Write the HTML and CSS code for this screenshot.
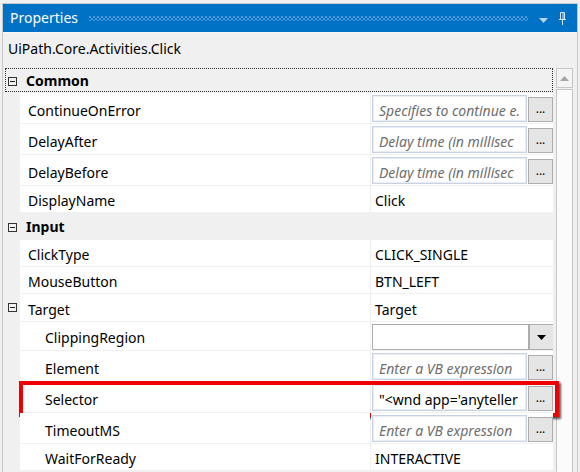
FILE: index.html
```html
<!DOCTYPE html>
<html>
<head>
<meta charset="utf-8">
<link rel="stylesheet" href="styles.css">
</head>
<body>
<div class="panel">
  <div class="titlebar">
    <span class="title">Properties</span>
    <span class="grip"></span>
    <svg class="menu-arrow" width="9" height="5" viewBox="0 0 9 5"><path d="M0 0h9L4.5 5z" fill="#b9d5f0"/></svg>
    <svg class="pin" width="9" height="13" viewBox="0 0 9 13"><path d="M2.5 0.5h4v7h-4z M1 7.5h7 M4.5 7.5v5.5" fill="none" stroke="#d6e7f7" stroke-width="1"/><path d="M5 1v6" stroke="#d6e7f7" stroke-width="1"/></svg>
  </div>
  <div class="typename">UiPath.Core.Activities.Click</div>
  <div class="body">
    <div class="grid">
      <div class="cat focused"><span class="exp"></span><span class="cat-name">Common</span></div>
      <div class="row ed"><div class="gutter"></div><div class="name">ContinueOnError</div><div class="val"><div class="tb ph">Specifies to continue e.</div><div class="btn">...</div></div></div>
      <div class="row ed"><div class="gutter"></div><div class="name">DelayAfter</div><div class="val"><div class="tb ph">Delay time (in millisec</div><div class="btn">...</div></div></div>
      <div class="row ed"><div class="gutter"></div><div class="name">DelayBefore</div><div class="val"><div class="tb ph">Delay time (in millisec</div><div class="btn">...</div></div></div>
      <div class="row tx"><div class="gutter"></div><div class="name">DisplayName</div><div class="val">Click</div></div>
      <div class="cat"><span class="exp"></span><span class="cat-name">Input</span></div>
      <div class="row tx"><div class="gutter"></div><div class="name">ClickType</div><div class="val">CLICK_SINGLE</div></div>
      <div class="row tx"><div class="gutter"></div><div class="name">MouseButton</div><div class="val">BTN_LEFT</div></div>
      <div class="row tx tall"><div class="gutter"><span class="exp"></span></div><div class="name">Target</div><div class="val">Target</div></div>
      <div class="row dd"><div class="gutter"></div><div class="name sub">ClippingRegion</div><div class="val"><div class="combo"></div><div class="btn arrow"><svg width="9" height="5" viewBox="0 0 9 5"><path d="M0 0h9L4.5 5z" fill="#000"/></svg></div></div></div>
      <div class="row ed"><div class="gutter"></div><div class="name sub">Element</div><div class="val"><div class="tb ph">Enter a VB expression</div><div class="btn">...</div></div></div>
      <div class="row ed"><div class="gutter"></div><div class="name sub">Selector</div><div class="val"><div class="tb">"&lt;wnd app='anyteller</div><div class="btn">...</div></div><div class="redbox"></div></div>
      <div class="row ed"><div class="gutter"></div><div class="name sub">TimeoutMS</div><div class="val"><div class="tb ph">Enter a VB expression</div><div class="btn">...</div></div></div>
      <div class="row tx"><div class="gutter"></div><div class="name sub">WaitForReady</div><div class="val">INTERACTIVE</div></div>
    </div>
    <div class="scrollbar">
      <div class="sb-up"><svg width="9" height="5" viewBox="0 0 9 5"><path d="M0 5h9L4.5 0z" fill="#a6a6a6"/></svg></div>
      <div class="sb-thumb"></div>
    </div>
  </div>
</div>
</body>
</html>
```

FILE: styles.css
```css
html, body {
  margin: 0;
  padding: 0;
}
body {
  width: 580px;
  height: 472px;
  overflow: hidden;
  background: #f0f0f0;
  font-family: "Noto Sans", "Open Sans", sans-serif;
  font-size: 14px;
  color: #000;
}
.panel {
  margin: 3px 0 0 2px;
  width: 576px;
  height: 469px;
  box-sizing: border-box;
  border: 1px solid #c8c8c8;
  border-bottom: none;
  display: flex;
  flex-direction: column;
  overflow: hidden;
}
.titlebar {
  height: 28px;
  flex: none;
  background: #0072c6;
  display: flex;
  align-items: center;
  padding: 0 10px 0 7px;
  color: #fff;
}
.title {
  font-size: 14px;
  line-height: 28px;
}
.grip {
  flex: 1;
  height: 5px;
  margin: 0 11px 0 11px;
  background-image:
    radial-gradient(circle at 1px 1px, #4a98d8 0.8px, transparent 1.1px),
    radial-gradient(circle at 3px 3px, #4a98d8 0.8px, transparent 1.1px);
  background-size: 4px 4px;
}
.menu-arrow {
  margin-top: 4px;
  margin-right: 10px;
}
.pin {
  display: block;
}
.typename {
  height: 36px;
  line-height: 32px;
  padding-left: 5px;
  flex: none;
  border-top: 1px solid #f7f7f7;
  box-sizing: border-box;
}
.body {
  flex: 1;
  display: flex;
}
.grid {
  width: 550px;
  flex: none;
}
.cat {
  height: 27px;
  display: flex;
  align-items: flex-start;
  margin-left: 2px;
  border: 1px dotted transparent;
  box-sizing: border-box;
  font-weight: bold;
  padding-top: 3px;
}
.cat.focused {
  height: 24px;
  margin-bottom: 1px;
  padding-top: 2px;
  border-color: #303030;
}
.exp {
  width: 9px;
  height: 9px;
  border: 1px solid #333;
  box-sizing: border-box;
  position: relative;
  margin: 6px 0 0 2px;
  flex: none;
}
.exp::after {
  content: "";
  position: absolute;
  left: 1px;
  right: 1px;
  top: 3px;
  height: 1px;
  background: #222;
}
.cat-name {
  margin-left: 9px;
  line-height: 19px;
}
.row {
  display: flex;
  gap: 1px;
  padding-bottom: 1px;
  position: relative;
}
.row.ed { height: 30px; }
.row.tx { height: 26px; }
.row.tx.tall { height: 27px; }
.row.dd { height: 28px; }
.gutter {
  width: 16px;
  flex: none;
  display: flex;
  align-items: center;
}
.gutter .exp {
  margin: 0 0 0 5px;
}
.name {
  width: 350px;
  flex: none;
  background: #fff;
  padding-left: 8px;
  box-sizing: border-box;
  white-space: nowrap;
  line-height: 19px;
}
.name.sub { padding-left: 25px; }
.row.tx .name, .row.tx .val { padding-top: 5px; line-height: 19px; }
.row.tx.tall .name, .row.tx.tall .val { padding-top: 6px; }
.row.ed .name { padding-top: 8px; }
.row.dd .name { padding-top: 6px; }
.val {
  flex: 1;
  background: #fff;
  display: flex;
  align-items: flex-start;
  padding-left: 4px;
  white-space: nowrap;
  overflow: hidden;
}
.row.ed .val, .row.dd .val { padding-left: 1px; }
.tb {
  width: 155px;
  height: 27px;
  margin-top: 2px;
  box-sizing: border-box;
  border: 1px solid #c9d2e3;
  box-shadow: inset 0 0 0 1px #e9edf4;
  padding: 5px 0 0 6px;
  line-height: 19px;
  overflow: hidden;
  white-space: nowrap;
  flex: none;
}
.tb.ph {
  font-style: italic;
  color: #6e6e6e;
}
.btn {
  width: 25px;
  height: 25px;
  margin: 4px 0 0 1px;
  box-sizing: border-box;
  border: 1px solid #adadad;
  background: #e5e5e5;
  font-size: 12px;
  line-height: 22px;
  text-align: center;
  flex: none;
}
.combo {
  width: 157px;
  height: 26px;
  margin-top: 2px;
  box-sizing: border-box;
  border: 1px solid #acacac;
  flex: none;
}
.btn.arrow {
  margin: 2px 0 0 0;
  height: 26px;
  display: flex;
  align-items: center;
  justify-content: center;
}
.redbox {
  position: absolute;
  left: 16px;
  top: -1px;
  width: 540px;
  height: 36px;
  box-sizing: border-box;
  border: 4px solid #ee0000;
  box-shadow: 2px 2px 2px rgba(0, 0, 0, 0.65);
}
.scrollbar {
  margin-left: 3px;
  width: 17px;
  flex: none;
  display: flex;
  flex-direction: column;
}
.sb-up {
  height: 20px;
  box-sizing: border-box;
  border: 1px solid #c6c6c6;
  background: #f4f4f4;
  display: flex;
  align-items: center;
  justify-content: center;
}
.sb-thumb {
  flex: 1;
  margin-top: 1px;
  border: 1px solid #c6c6c6;
  border-bottom: none;
  background: #fbfbfb;
}
```
